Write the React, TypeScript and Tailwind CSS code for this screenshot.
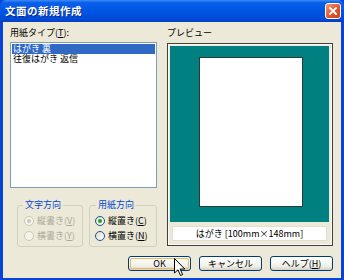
import { type ReactNode } from 'react'

const font = { fontFamily: '"Noto Sans CJK JP", "Noto Sans", sans-serif' }

function Radio({ label, checked, disabled }: { label: ReactNode; checked?: boolean; disabled?: boolean }) {
  return (
    <div className="flex items-center h-[12px] gap-[3px]">
      <span
        className={
          disabled
            ? 'w-[10px] h-[10px] rounded-full border border-[#cac8bb] bg-[#f5f4ea] flex items-center justify-center'
            : 'w-[10px] h-[10px] rounded-full border border-[#1c5180] bg-[linear-gradient(135deg,#dcdcd5,#ffffff)] flex items-center justify-center'
        }
      >
        {checked && (
          <span className={disabled ? 'w-[4px] h-[4px] rounded-full bg-[#cac8bb]' : 'w-[4px] h-[4px] rounded-full bg-[#21a121]'} />
        )}
      </span>
      <span className={disabled ? 'text-[#aca899]' : 'text-black'}>{label}</span>
    </div>
  )
}

function Button({ children, primary }: { children: ReactNode; primary?: boolean }) {
  return (
    <div className="w-[63px] h-[15px] rounded-[3px] border border-[#003c74] bg-[linear-gradient(to_bottom,#ffffff,#f0f0ea_70%,#d6d0c5)] p-[1px]">
      <div
        className={
          primary
            ? 'h-full rounded-[2px] border border-[#f5b74d] flex items-center justify-center leading-none'
            : 'h-full rounded-[2px] flex items-center justify-center leading-none'
        }
      >
        {children}
      </div>
    </div>
  )
}

export default function App() {
  return (
    <div className="relative w-[344px] h-[280px] bg-[#0842d6] flex flex-col text-[9px] overflow-hidden" style={font}>
      {/* title bar */}
      <div className="h-[22px] shrink-0 flex items-center justify-between bg-[linear-gradient(to_bottom,#3d8cf6_0%,#0a5fea_12%,#0055e5_50%,#004ad6_85%,#0340c4_100%)] rounded-t-[6px]">
        <span className="pl-[5px] text-white font-bold text-[10.5px] leading-none tracking-[0.5px] [text-shadow:1px_1px_0_#0a2a8a]">
          文面の新規作成
        </span>
        <div className="mr-[3px] w-[16px] h-[16px] rounded-[3px] border border-white bg-[linear-gradient(135deg,#f39b7c,#e2552b_55%,#c8421c)] flex items-center justify-center">
          <svg width="10" height="10" viewBox="0 0 10 10">
            <path d="M2 2 L8 8 M8 2 L2 8" stroke="white" strokeWidth="1.8" strokeLinecap="square" />
          </svg>
        </div>
      </div>

      {/* client */}
      <div className="flex-1 mx-[3px] mb-[3px] bg-[#ece9d8] flex flex-col pt-[5px] pb-[7px]">
        <div className="flex items-start pl-[7px] gap-[10px]">
          {/* left */}
          <div className="w-[147px] flex flex-col">
            <div className="h-[12px] leading-[12px]">用紙タイプ(<span className="underline">T</span>):</div>
            <div className="mt-[3px] h-[146px] border border-[#7f9db9] bg-white p-[1px] flex flex-col">
              <div className="h-[10px] leading-[10px] bg-[#316ac5] text-white pl-[1px]">はがき 裏</div>
              <div className="h-[10px] leading-[10px] pl-[1px]">往復はがき 返信</div>
            </div>
            <div className="mt-[11px] ml-[7px] flex gap-[6px]">
              <fieldset className="w-[66px] h-[48px] border border-[#d0d0bf] rounded-[3px] px-[6px]">
                <legend className="px-[2px] ml-[-1px] h-[12px] leading-[12px] text-[#0046d5]">文字方向</legend>
                <div className="flex flex-col gap-[3px] mt-[4px]">
                  <Radio label={<>縦書き(<span className="underline">V</span>)</>} checked disabled />
                  <Radio label={<>横書き(<span className="underline">Y</span>)</>} disabled />
                </div>
              </fieldset>
              <fieldset className="w-[68px] h-[48px] border border-[#d0d0bf] rounded-[3px] px-[5px]">
                <legend className="px-[2px] ml-[1px] h-[12px] leading-[12px] text-[#0046d5]">用紙方向</legend>
                <div className="flex flex-col gap-[3px] mt-[4px]">
                  <Radio label={<>縦置き(<span className="underline">C</span>)</>} checked />
                  <Radio label={<>横置き(<span className="underline">N</span>)</>} />
                </div>
              </fieldset>
            </div>
          </div>

          {/* right */}
          <div className="w-[166px] flex flex-col">
            <div className="h-[12px] leading-[12px]">プレビュー</div>
            <div className="mt-[4px] h-[203px] border border-[#404040]">
              <div className="h-full border border-[#fafafa] p-[1px] pr-[2px] flex flex-col">
                <div className="h-[176px] bg-[#008080] flex justify-center pl-[2px]">
                  <div className="mt-[11px] w-[104px] h-[150px] bg-white border border-[#2a3a3a]" />
                </div>
                <div className="mt-[4px] mx-[2px] h-[15px] bg-white border border-[#e2dfd2] flex items-center justify-center leading-none">
                  はがき [100mm×148mm]
                </div>
              </div>
            </div>
          </div>
        </div>

        <div className="mt-[9px] flex justify-end gap-[8px] pr-[8px]">
          <Button primary>OK</Button>
          <Button>キャンセル</Button>
          <Button>ヘルプ(<span className="underline">H</span>)</Button>
        </div>
      </div>

      {/* mouse pointer */}
      <svg className="absolute left-[174px] top-[258px]" width="12" height="19" viewBox="0 0 12 19">
        <path d="M0.5 0.5 L0.5 15 L4 11.8 L6.5 17.5 L8.6 16.6 L6.2 11 L10.8 11 Z" fill="white" stroke="black" strokeWidth="1" strokeLinejoin="miter" />
      </svg>
    </div>
  )
}
